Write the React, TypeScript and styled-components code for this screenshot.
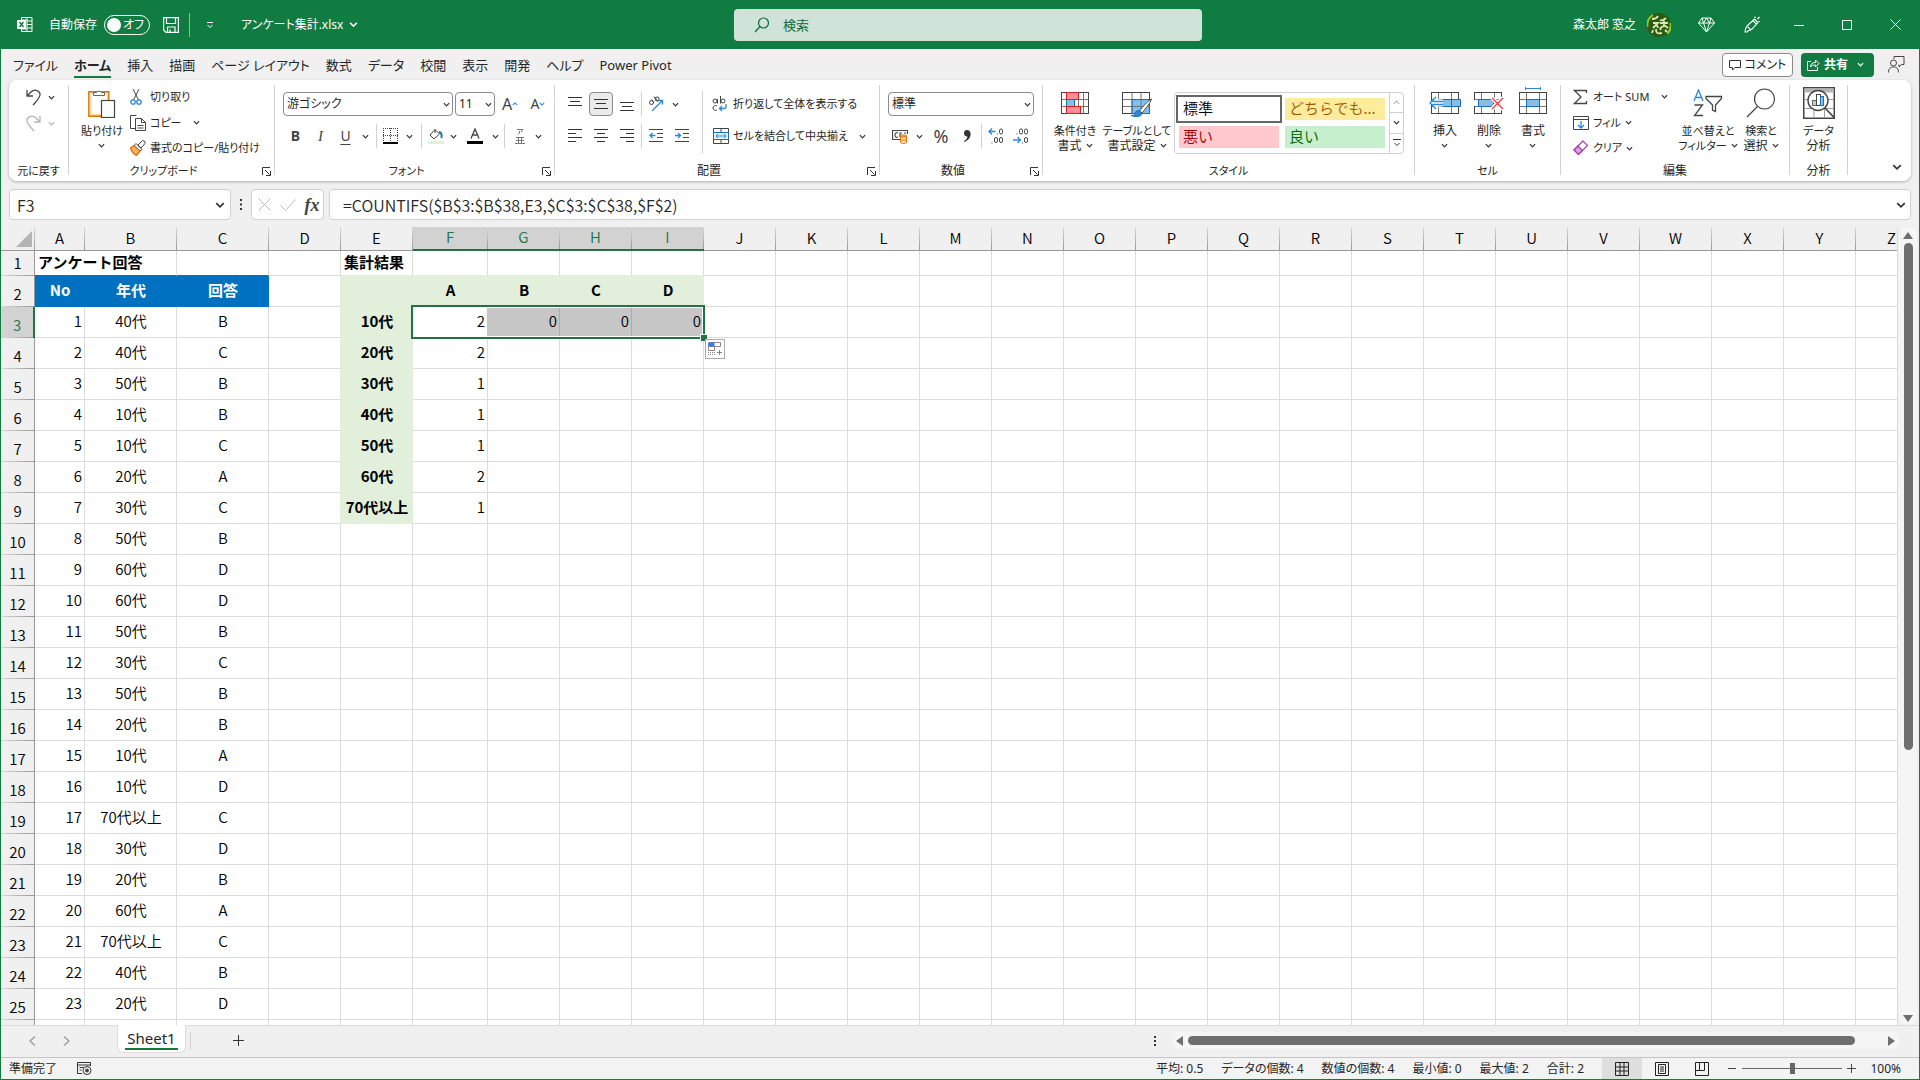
import React from "react";
import styled, { createGlobalStyle, css } from "styled-components";

const UI_FONT = `"Noto Sans", "Noto Sans CJK JP", sans-serif`;
const SHEET_FONT = `"Noto Sans CJK JP", sans-serif`;
const GREEN = "#107c41";
const SELECT_GREEN = "#217346";
const LINE = "#dcdcdc";
const HEAD_LINE = "#999999";
const BLUE = "#0070c0";
const PALE = "#e2efda";

const GlobalStyle = createGlobalStyle`
  *, *::before, *::after { box-sizing: border-box; }
  body { margin: 0; background: #f0f0f0; color: #262626; font: 12px/16px ${UI_FONT}; font-feature-settings: "palt"; }
  button, input, select { font: inherit; font-feature-settings: inherit; color: inherit; margin: 0; }
  svg { display: block; flex: none; }
`;

const Window = styled.div`
  height: 100vh;
  display: flex;
  flex-direction: column;
  overflow: hidden;
  border: 1px solid ${GREEN};
  border-top: 0;
`;

const plainButton = css`
  display: flex;
  align-items: center;
  justify-content: center;
  padding: 0;
  border: 0;
  background: none;
  white-space: nowrap;
`;

/* ---------- title bar ---------- */

const TitleBar = styled.header`
  display: grid;
  grid-template-columns: minmax(0, 1fr) 484px minmax(0, 1fr);
  align-items: center;
  height: 49px;
  background: ${GREEN};
  color: #fff;
`;

const TitleLeft = styled.div`
  display: flex;
  align-items: center;
  padding-left: 16px;
  white-space: nowrap;
`;

const TitleRight = styled.div`
  display: flex;
  align-items: center;
  justify-content: flex-end;
`;

const TitleButton = styled.button<{ $w: number }>`
  ${plainButton}
  width: ${(p) => p.$w}px;
  height: 48px;
  flex: none;
`;

const AutoSave = styled.label`
  display: flex;
  align-items: center;
  gap: 7px;
  margin: 0 13px 0 16px;
`;

const Switch = styled.span`
  position: relative;
  display: flex;
  align-items: center;
  justify-content: flex-end;
  width: 46px;
  height: 20px;
  padding-right: 5px;
  border: 1px solid #fff;
  border-radius: 10px;
  &::before {
    content: "";
    position: absolute;
    left: 2px;
    top: 2px;
    width: 14px;
    height: 14px;
    border-radius: 50%;
    background: #fff;
  }
`;

const SwitchInput = styled.input`
  position: absolute;
  inset: 0;
  width: 100%;
  height: 100%;
  opacity: 0;
`;

const TitleRule = styled.span`
  width: 1px;
  height: 24px;
  margin-left: 10px;
  background: #88bea0;
`;

const FileName = styled.button`
  ${plainButton}
  gap: 6px;
  margin-left: 11px;
`;

const Search = styled.label`
  display: flex;
  align-items: center;
  gap: 13px;
  height: 32px;
  margin-left: 16px;
  padding: 0 20px;
  border-radius: 4px;
  background: #cfe3d8;
  color: #0f6b39;
`;

const SearchInput = styled.input`
  flex: 1;
  min-width: 0;
  height: 24px;
  padding: 0;
  border: 0;
  outline: 0;
  background: none;
  font-size: 13px;
  &::placeholder { color: #0f6b39; opacity: 1; }
`;

const Avatar = styled.span`
  display: flex;
  margin: 0 12px 0 11px;
`;

/* ---------- tabs ---------- */

const TabBar = styled.nav`
  display: flex;
  align-items: center;
  height: 31px;
  padding: 0 14px 0 4px;
  flex: none;
`;

const Tab = styled.button<{ $active?: boolean }>`
  ${plainButton}
  position: relative;
  height: 30px;
  padding: 0 8px;
  font-size: 13px;
  font-weight: ${(p) => (p.$active ? 700 : 400)};
  &::after {
    content: "";
    display: ${(p) => (p.$active ? "block" : "none")};
    position: absolute;
    left: 8px;
    right: 8px;
    bottom: 2px;
    height: 2px;
    background: ${GREEN};
  }
`;

const Spacer = styled.div`
  flex: 1;
`;

const CommentButton = styled.button`
  ${plainButton}
  gap: 4px;
  width: 71px;
  height: 24px;
  border: 1px solid #8a8a8a;
  border-radius: 4px;
  background: #fff;
`;

const ShareButton = styled.button`
  ${plainButton}
  gap: 4px;
  width: 73px;
  height: 24px;
  margin: 0 14px 0 8px;
  border-radius: 4px;
  background: ${GREEN};
  color: #fff;
  font-weight: 600;
`;

/* ---------- ribbon ---------- */

const Ribbon = styled.section`
  display: flex;
  flex: none;
  height: 101px;
  margin: 0 8px;
  padding-top: 3px;
  border-radius: 8px;
  background: #fff;
  box-shadow: 0 1px 3px rgba(0, 0, 0, 0.28);
`;

const GroupBox = styled.div<{ $w: number }>`
  display: flex;
  flex-direction: column;
  flex: none;
  width: ${(p) => p.$w}px;
`;

const GroupBody = styled.div<{ $pad: number }>`
  display: flex;
  height: 78px;
  padding-left: ${(p) => p.$pad}px;
`;

const GroupFoot = styled.div`
  display: flex;
  align-items: center;
  height: 20px;
`;

const GroupName = styled.span<{ $size: number }>`
  flex: 1;
  font-size: ${(p) => p.$size}px;
  text-align: center;
  white-space: nowrap;
`;

const Rule = styled.span<{ $h?: number; $top?: number; $gap?: number }>`
  flex: none;
  width: 1px;
  height: ${(p) => p.$h ?? 90}px;
  margin: ${(p) => p.$top ?? 2}px ${(p) => p.$gap ?? 0}px 0;
  background: #d1d1d1;
`;

const Stack = styled.div`
  display: flex;
  flex-direction: column;
  flex: none;
  padding-top: 1px;
`;

const EditColumn = styled(Stack)`
  width: 106px;
`;

const TwoRows = styled.div`
  display: flex;
  flex-direction: column;
  gap: 8px;
  padding-top: 9px;
`;

const ToolRow = styled.div<{ $gap?: number; $h?: number }>`
  display: flex;
  align-items: center;
  gap: ${(p) => p.$gap ?? 0}px;
  height: ${(p) => p.$h ?? 24}px;
`;

const IconButton = styled.button<{ $w: number; $on?: boolean; $h?: number }>`
  ${plainButton}
  flex: none;
  width: ${(p) => p.$w}px;
  height: ${(p) => p.$h ?? 24}px;
  ${(p) =>
    p.$on &&
    css`
      border: 1px solid #8a8a8a;
      border-radius: 4px;
      background: #ebebeb;
    `}
`;

const LineButton = styled.button`
  ${plainButton}
  justify-content: flex-start;
  gap: 4px;
  height: 26px;
  font-size: 11px;
`;

const BigButton = styled.button<{ $w: number }>`
  ${plainButton}
  flex-direction: column;
  justify-content: flex-start;
  gap: 4px;
  width: ${(p) => p.$w}px;
  padding-top: 4px;
  line-height: 15px;
`;

const BigIcon = styled.span`
  display: flex;
  align-items: center;
  justify-content: center;
  height: 32px;
`;

const BigLine = styled.span<{ $size: number }>`
  display: flex;
  align-items: center;
  justify-content: center;
  gap: 4px;
  height: 15px;
  font-size: ${(p) => p.$size}px;
`;

const SelectShell = styled.span<{ $w: number }>`
  position: relative;
  display: flex;
  width: ${(p) => p.$w}px;
  height: 24px;
`;

const SelectBox = styled.select`
  appearance: none;
  width: 100%;
  padding: 0 16px 0 3px;
  border: 1px solid #8a8a8a;
  border-radius: 4px;
  background: #fff;
`;

const SelectArrow = styled.span`
  position: absolute;
  right: 3px;
  top: 9px;
  pointer-events: none;
`;

const Gallery = styled.div`
  display: flex;
  width: 230px;
  height: 62px;
  margin: 9px 0 0 4px;
  border: 1px solid #d1d1d1;
  border-radius: 4px;
`;

const GalleryGrid = styled.div`
  flex: 1;
  display: grid;
  grid-template-columns: 106px 106px;
  grid-template-rows: 28px 28px;
  padding: 2px 1px;
`;

const StyleCell = styled.button<{ $bg: string; $fg: string; $on?: boolean }>`
  ${plainButton}
  justify-content: flex-start;
  padding: 0 0 3px 4px;
  border: 3px solid #fff;
  outline: ${(p) => (p.$on ? "2px solid #666" : "0")};
  outline-offset: -2px;
  background: ${(p) => p.$bg};
  color: ${(p) => p.$fg};
  font: 15px/20px ${SHEET_FONT};
  font-weight: 350;
  font-feature-settings: normal;
`;

const GalleryNav = styled.div`
  display: flex;
  flex-direction: column;
  width: 14px;
  border-left: 1px solid #d1d1d1;
`;

const GalleryButton = styled.button`
  ${plainButton}
  flex: 1;
  & + & { border-top: 1px solid #d1d1d1; }
`;

const RibbonEnd = styled.div`
  flex: 1;
  display: flex;
  align-items: flex-end;
  justify-content: flex-end;
  padding: 0 4px 2px 0;
`;

const Glyph = styled.span<{ $size?: number; $weight?: number; $italic?: boolean; $underline?: boolean }>`
  font-size: ${(p) => p.$size ?? 14}px;
  font-weight: ${(p) => p.$weight ?? 400};
  font-style: ${(p) => (p.$italic ? "italic" : "normal")};
  font-family: ${(p) => (p.$italic ? `"Liberation Serif", serif` : UI_FONT)};
  text-decoration: ${(p) => (p.$underline ? "underline" : "none")};
  text-underline-offset: 3px;
  color: #444;
`;

/* ---------- formula bar ---------- */

const FormulaBar = styled.div`
  display: flex;
  flex: none;
  height: 31px;
  margin: 8px 8px 7px;
  font: 16px/20px ${SHEET_FONT};
  font-weight: 350;
`;

const Field = styled.div<{ $w?: number }>`
  display: flex;
  align-items: center;
  flex: ${(p) => (p.$w ? "none" : "1")};
  width: ${(p) => (p.$w ? `${p.$w}px` : "auto")};
  border: 1px solid #d1d1d1;
  border-radius: 4px;
  background: #fff;
`;

const FieldInput = styled.input<{ $pad: number }>`
  flex: 1;
  min-width: 0;
  height: 26px;
  padding: 0 0 0 ${(p) => p.$pad}px;
  border: 0;
  outline: 0;
  background: none;
  font-feature-settings: normal;
`;

const Dots = styled.span<{ $w: number }>`
  display: flex;
  align-items: center;
  justify-content: center;
  width: ${(p) => p.$w}px;
`;

/* ---------- sheet ---------- */

const SheetArea = styled.div`
  display: flex;
  flex: 1;
  min-height: 0;
`;

const GridView = styled.div`
  flex: 1;
  min-width: 0;
  overflow: hidden;
  border-right: 1px solid ${LINE};
`;

const Grid = styled.table`
  table-layout: fixed;
  width: 1926px;
  border-collapse: separate;
  border-spacing: 0;
  font: 15px/20px ${SHEET_FONT};
  font-weight: 350;
  font-feature-settings: normal;
  color: #000;
`;

const Col = styled.col<{ $w: number }>`
  width: ${(p) => p.$w}px;
`;

const ColHead = styled.th<{ $on?: boolean }>`
  height: 24px;
  padding: 0 1px 2px 0;
  font-weight: 350;
  border-bottom: ${(p) => (p.$on ? `2px solid ${SELECT_GREEN}` : `1px solid ${HEAD_LINE}`)};
  color: ${(p) => (p.$on ? SELECT_GREEN : "#000")};
  background: linear-gradient(#d8d8d8, ${HEAD_LINE}) right / 1px 100% no-repeat,
    ${(p) => (p.$on ? "#d2d2d2" : "#f0f0f0")};
`;

const Corner = styled.th`
  height: 24px;
  padding: 0 3px 3px 0;
  vertical-align: bottom;
  border-bottom: 1px solid ${HEAD_LINE};
  background: linear-gradient(#d8d8d8, ${HEAD_LINE}) right / 1px 100% no-repeat, #f0f0f0;
  svg { margin-left: auto; }
`;

const RowHead = styled.th<{ $on?: boolean; $h: number }>`
  height: ${(p) => p.$h}px;
  padding: 0 0 3px;
  vertical-align: bottom;
  font-weight: 350;
  border-right: ${(p) => (p.$on ? `2px solid ${SELECT_GREEN}` : `1px solid ${HEAD_LINE}`)};
  color: ${(p) => (p.$on ? SELECT_GREEN : "#000")};
  background: linear-gradient(90deg, #d8d8d8, ${HEAD_LINE}) bottom / 100% 1px no-repeat,
    ${(p) => (p.$on ? "#d2d2d2" : "#f0f0f0")};
`;

const Cell = styled.td<{
  $fill?: string;
  $right: string;
  $bottom: string;
  $align?: string;
  $bold?: boolean;
  $white?: boolean;
}>`
  position: relative;
  padding: 0 2px 2px 3px;
  white-space: nowrap;
  background: ${(p) => p.$fill ?? "#fff"};
  border-right: 1px solid ${(p) => p.$right};
  border-bottom: 1px solid ${(p) => p.$bottom};
  text-align: ${(p) => p.$align ?? "left"};
  font-weight: ${(p) => (p.$bold ? 700 : 350)};
  color: ${(p) => (p.$white ? "#fff" : "#000")};
`;

const Selection = styled.span`
  position: absolute;
  z-index: 2;
  left: -2px;
  top: -2px;
  width: 294px;
  height: 34px;
  border: 2px solid ${SELECT_GREEN};
  box-shadow: inset 0 0 0 1px #fff;
  pointer-events: none;
  &::after {
    content: "";
    position: absolute;
    right: -4px;
    bottom: -4px;
    width: 7px;
    height: 7px;
    border: 1px solid #fff;
    border-width: 1px 0 0 1px;
    background: ${SELECT_GREEN};
  }
`;

const FillOptions = styled.button`
  ${plainButton}
  position: absolute;
  z-index: 2;
  left: 292px;
  top: 32px;
  width: 20px;
  height: 20px;
  border: 1px solid #ababab;
  background: #fff;
`;

const VScroll = styled.div`
  display: flex;
  flex-direction: column;
  align-items: center;
  justify-content: space-between;
  width: 18px;
  margin: 0 2px 0 1px;
  padding: 5px 0 3px;
  border-radius: 8px;
  background: #f5f5f5;
`;

const VTrack = styled.div`
  flex: 1;
  width: 9px;
  margin: 4px 0;
`;

const VThumb = styled.div`
  height: 66%;
  border-radius: 5px;
  background: #6e6e6e;
`;

/* ---------- bottom ---------- */

const SheetTabs = styled.div`
  display: flex;
  align-items: center;
  flex: none;
  height: 32px;
  padding: 0 19px 2px 14px;
  border-top: 1px solid ${LINE};
`;

const SheetTab = styled.button`
  ${plainButton}
  align-self: flex-start;
  width: 69px;
  height: 28px;
  margin: -1px 4px 0 34px;
  border: 1px solid #dcdcdc;
  border-top: 0;
  border-radius: 0 0 6px 6px;
  background: #fff;
  font-size: 15px;
`;

const SheetName = styled.span`
  padding: 0 2px;
  border-bottom: 2px solid ${GREEN};
  line-height: 20px;
`;

const HScroll = styled.div`
  display: flex;
  align-items: center;
  width: 728px;
  height: 17px;
  margin-left: 9px;
  padding: 0 5px 0 4px;
  border-radius: 8px;
  background: #f5f5f5;
`;

const HTrack = styled.div`
  flex: 1;
  margin: 0 5px;
`;

const HThumb = styled.div`
  width: 96%;
  height: 9px;
  border-radius: 5px;
  background: #6e6e6e;
`;

const StatusBar = styled.footer`
  display: flex;
  align-items: center;
  flex: none;
  height: 22px;
  padding: 0 18px 0 8px;
  border-top: 1px solid #c6c6c6;
  background: #f3f3f3;
  white-space: nowrap;
`;

const Stats = styled.div`
  display: flex;
  gap: 18px;
  margin-right: 18px;
`;

const ViewButton = styled.button<{ $on?: boolean }>`
  ${plainButton}
  width: 40px;
  height: 21px;
  background: ${(p) => (p.$on ? "#dedede" : "none")};
`;

const ZoomButton = styled.button<{ $w: number }>`
  ${plainButton}
  width: ${(p) => p.$w}px;
  height: 20px;
`;

const Slider = styled.input`
  appearance: none;
  width: 100px;
  height: 14px;
  background: linear-gradient(#666, #666) center / 100% 1px no-repeat;
  &::-webkit-slider-thumb {
    appearance: none;
    width: 5px;
    height: 11px;
    background: #666;
  }
`;

const ZoomValue = styled.span`
  width: 41px;
  text-align: right;
`;

/* ---------- icons ---------- */

const Chevron = ({ size = 7, color = "#333", up = false }: { size?: number; color?: string; up?: boolean }) => (
  <svg width={size} height={size} viewBox="0 0 8 8" fill="none" stroke={color} strokeWidth="1.4">
    <path d={up ? "M1 5.5 4 2.5 7 5.5" : "M1 2.5 4 5.5 7 2.5"} />
  </svg>
);

const Launcher = () => (
  <IconButton $w={16} $h={16} aria-label="詳細設定">
    <svg width="9" height="9" viewBox="0 0 9 9" fill="none" stroke="#333">
      <path d="M.5 8V.5H8M3 3l4.5 4.5M8.500 4v4.500H4" />
    </svg>
  </IconButton>
);

const Ico = ({ w = 16, h = 16, children }: { w?: number; h?: number; children: React.ReactNode }) => (
  <svg width={w} height={h} viewBox={`0 0 ${w} ${h}`} fill="none" stroke="#444" strokeWidth="1">
    {children}
  </svg>
);

const ExcelIcon = () => (
  <svg width="16" height="17" viewBox="0 0 16 17" fill="none" stroke="#fff">
    <path d="M4.500 4V1.500h10.500v14H4.500V13M10 1.500v14M10 5h5M10 8.500h5M10 12h5M4.500 4h5.500M4.500 13h5.500" />
    <rect x="0" y="4" width="9" height="9" fill="#fff" stroke="none" />
    <path d="m2.500 6 4 5M6.500 6l-4 5" stroke={GREEN} strokeWidth="1.4" />
  </svg>
);

const SaveIcon = () => (
  <svg width="16" height="16" viewBox="0 0 16 16" fill="none" stroke="#fff" strokeWidth="1.2">
    <path d="M.6.6h14.800v14.800H3L.6 13zM3.500 1v5.500h9V1M4.500 15v-5h7.500v5M7 12.500V15" />
  </svg>
);

const linesIcon = (rows: [number, number, number][]) => (
  <Ico w={14} h={14}>
    <path stroke="#333" d={rows.map(([x, y, w]) => `M${x} ${y}.5h${w}`).join("")} />
  </Ico>
);

const GridBase = ({ top = 0 }: { top?: number }) => (
  <g transform={`translate(0 ${top})`}>
    <rect x="0.500" y="0.500" width="27" height="21" fill="#fff" stroke="#444" />
    <path stroke="#777" d="M7.500 1v20M20.500 1v20M1 7.500h26M1 14.500h26" />
  </g>
);

const CondIcon = () => (
  <svg width="28" height="22" viewBox="0 0 28 22" fill="none">
    <rect x=".5" y=".5" width="27" height="21" fill="#fff" stroke="#444" />
    <path stroke="#777" d="M5.500 1v20M17.500 1v20M22.500 1v20M1 7.500h26M1 14.500h26" />
    <rect x="5.500" y=".5" width="12" height="7" fill="#ff8f94" stroke="#d02020" />
    <rect x="5.500" y="7.500" width="8" height="7" fill="#83beec" stroke="#1a6fb5" />
    <rect x="5.500" y="14.500" width="14" height="7" fill="#ff8f94" stroke="#d02020" />
  </svg>
);

const TableIcon = () => (
  <svg width="30" height="28" viewBox="0 0 30 28" fill="none">
    <rect x=".5" y="3.500" width="27" height="21" fill="#fff" stroke="#444" />
    <path d="M10 10.500h17.500v14H10z" fill="#83beec" />
    <path stroke="#777" d="M10 4v20M19 4v20M1 10.500h26M1 17.500h26" />
    <path d="M10 10.500h17.500v14H10z" stroke="#1a6fb5" />
    <path d="M29.500 10c-4 2-9 8-12 12l2.500 2c3-4 8-9 9.500-14z" fill="#fff" stroke="#444" />
    <path d="M17 21.500c-3 0-4 1.500-4 3.500 0 1-2 1.500-4 1.500 3 1.500 11 2 11-2.500z" fill="#2b88d8" stroke="#1a6fb5" />
  </svg>
);

const InsertIcon = () => (
  <svg width="32" height="22" viewBox="-2 0 32 22" fill="none">
    <GridBase />
    <path d="M11 7.500h18.500v7H11z" fill="#83beec" stroke="#1a6fb5" />
    <path d="M20.500 8v6" stroke="#1a6fb5" />
    <path d="M12 9.500H3l3-4M12 12.500H3l3 4" stroke="#fff" strokeWidth="4" />
    <path d="M12 9.500H1.500M12 12.500H1.500M5 5l-6 6 6 6" stroke="#2b88d8" strokeWidth="1.300" />
  </svg>
);

const DeleteIcon = () => (
  <svg width="30" height="22" viewBox="0 0 30 22" fill="none">
    <GridBase />
    <path d="M0 8h5v6H0zM22 8h8v6h-8z" fill="#fff" />
    <path d="M4.500 7.500H17l3 3.500-3 3.500H4.500z" fill="#83beec" stroke="#1a6fb5" />
    <path d="m18 6 11 11M29 6 18 17" stroke="#fff" strokeWidth="4" />
    <path d="m18 6 11 11M29 6 18 17" stroke="#e84040" strokeWidth="1.400" />
  </svg>
);

const FormatIcon = () => (
  <svg width="28" height="32" viewBox="0 0 28 32" fill="none">
    <GridBase top={5} />
    <rect x="7.500" y="12.500" width="13" height="7" fill="#83beec" stroke="#1a6fb5" />
    <path d="M6.500 0v3M21.500 0v3M6.500 1.500h15" stroke="#2b88d8" />
  </svg>
);

const SortIcon = () => (
  <svg width="30" height="28" viewBox="0 0 30 28" fill="none" strokeWidth="1.300">
    <path d="M1 12 5.500 1 10 12M2.500 8.500h6" stroke="#2b88d8" />
    <path d="M1.500 16h8L1.500 26.500h8.500" stroke="#444" />
    <path d="M13 7.500h15.500v2L22.500 16v6.500l-3-1.500v-5L13 9.500z" stroke="#444" />
  </svg>
);

const FindIcon = () => (
  <svg width="30" height="30" viewBox="0 0 30 30" fill="none" stroke="#444" strokeWidth="1.200">
    <circle cx="18.500" cy="11" r="10" />
    <path d="M11.500 18.500 1 29" />
  </svg>
);

const AnalysisIcon = () => (
  <svg width="32" height="32" viewBox="0 0 32 32" fill="none">
    <rect x=".75" y=".75" width="30.500" height="30.500" fill="#fff" stroke="#444" strokeWidth="1.500" />
    <path d="M1.500 1.500h29v4h-29z" fill="#b5b5b5" />
    <path d="M1 12.500h30M1 21.500h30M11 6v25M21.500 6v25" stroke="#999" />
    <circle cx="15" cy="13.500" r="10" fill="#fff" stroke="#444" strokeWidth="1.400" />
    <rect x="9.500" y="13.500" width="4" height="5" fill="#ccc" stroke="#666" />
    <rect x="13.500" y="7.500" width="4" height="11" fill="#fff" stroke="#444" />
    <rect x="17.500" y="9.500" width="3" height="9" fill="#83beec" stroke="#1a6fb5" />
    <path d="m22 21 9.500 10" stroke="#444" strokeWidth="1.600" />
  </svg>
);

const PasteIcon = () => (
  <svg width="28" height="30" viewBox="0 0 28 30" fill="none">
    <path d="M2 4.500h18v23H2z" fill="#fff" stroke="#fbdca4" strokeWidth="3" />
    <path d="M.75 3.750h20v24.500h-20z" stroke="#d9730d" strokeWidth="1.300" />
    <path d="M5.500 7.500v-3h3a3 3 0 0 1 5 0h3v3z" fill="#fff" stroke="#666" />
    <rect x="13.500" y="12.500" width="13" height="17" fill="#fff" stroke="#444" strokeWidth="1.200" />
  </svg>
);

/* ---------- data ---------- */

const TABS = ["ファイル", "ホーム", "挿入", "描画", "ページ レイアウト", "数式", "データ", "校閲", "表示", "開発", "ヘルプ", "Power Pivot"];

const COLS: [string, number][] = "ABCDEFGHIJKLMNOPQRSTUVWXYZ".split("").map((c) => {
  const widths: Record<string, number> = { A: 50, B: 92, C: 92, F: 75 };
  return [c, widths[c] ?? 72];
});

const ANSWERS: [string, string][] = [
  ["40代", "B"], ["40代", "C"], ["50代", "B"], ["10代", "B"], ["10代", "C"], ["20代", "A"],
  ["30代", "C"], ["50代", "B"], ["60代", "D"], ["60代", "D"], ["50代", "B"], ["30代", "C"],
  ["50代", "B"], ["20代", "B"], ["10代", "A"], ["10代", "D"], ["70代以上", "C"], ["30代", "D"],
  ["20代", "B"], ["60代", "A"], ["70代以上", "C"], ["40代", "B"], ["20代", "D"],
];

const SUMMARY: [string, number][] = [
  ["10代", 2], ["20代", 2], ["30代", 1], ["40代", 1], ["50代", 1], ["60代", 2], ["70代以上", 1],
];

const STATS = ["平均: 0.5", "データの個数: 4", "数値の個数: 4", "最小値: 0", "最大値: 2", "合計: 2"];

type CellData = { text?: string | number; align?: string; bold?: boolean; white?: boolean; span?: number };

function cellAt(c: string, r: number): CellData {
  if (r === 1) {
    if (c === "A") return { text: "アンケート回答", bold: true, span: 2 };
    if (c === "E") return { text: "集計結果", bold: true };
    return {};
  }
  if (r === 2) {
    const heads: Record<string, string> = { A: "No", B: "年代", C: "回答" };
    if (heads[c]) return { text: heads[c], align: "center", bold: true, white: true };
    const at = "FGHI".indexOf(c);
    return at >= 0 ? { text: "ABCD"[at], align: "center", bold: true } : {};
  }
  const answer = ANSWERS[r - 3];
  if (answer && c === "A") return { text: r - 2, align: "right" };
  if (answer && c === "B") return { text: answer[0], align: "center" };
  if (answer && c === "C") return { text: answer[1], align: "center" };
  const sum = SUMMARY[r - 3];
  if (sum && c === "E") return { text: sum[0], align: "center", bold: true };
  if (sum && c === "F") return { text: sum[1], align: "right" };
  if (r === 3 && "GHI".includes(c)) return { text: 0, align: "right" };
  return {};
}

function fillAt(c: string | undefined, r: number): string | undefined {
  if (!c) return undefined;
  if (r === 2 && "ABC".includes(c)) return BLUE;
  if (r === 2 && "EFGHI".includes(c)) return PALE;
  if (c === "E" && r >= 3 && r <= 9) return PALE;
  if (r === 3 && "GHI".includes(c)) return "#c6c6c6";
  return undefined;
}

function lineColors(i: number, r: number) {
  const c = COLS[i][0];
  const own = fillAt(c, r);
  if (own === "#c6c6c6") return { right: "#ababab", bottom: LINE };
  const next = fillAt(COLS[i + 1]?.[0], r);
  const below = fillAt(c, r + 1);
  return {
    right: own ?? next ?? LINE,
    bottom: own ?? (below === "#c6c6c6" ? LINE : below) ?? LINE,
  };
}

const ROWS = Array.from({ length: 25 }, (_, i) => i + 1);

const hasKana = (text: string) => /[ぁ-ヶ]/.test(text);
const labelSize = (text: string) => (hasKana(text) ? 11 : 12);

/* ---------- pieces ---------- */

function Group({ w, name, pad = 8, launcher, children }: { w: number; name: string; pad?: number; launcher?: boolean; children: React.ReactNode }) {
  return (
    <>
      <GroupBox $w={w}>
        <GroupBody $pad={pad}>{children}</GroupBody>
        <GroupFoot>
          <GroupName $size={labelSize(name)}>{name}</GroupName>
          {launcher && <Launcher />}
        </GroupFoot>
      </GroupBox>
      <Rule />
    </>
  );
}

const Arrow = ({ w, label, color }: { w: number; label: string; color?: string }) => (
  <IconButton $w={w} aria-label={label}>
    <Chevron color={color} />
  </IconButton>
);

const Big = ({ w, icon, lines, arrow = true }: { w: number; icon: React.ReactNode; lines: string[]; arrow?: boolean }) => (
  <BigButton $w={w}>
    <BigIcon>{icon}</BigIcon>
    <span>
      <BigLine $size={labelSize(lines[0])}>{lines[0]}</BigLine>
      <BigLine $size={labelSize(lines[1])}>
        {lines[1]}
        {arrow && <Chevron />}
      </BigLine>
    </span>
  </BigButton>
);

const Combo = ({ w, label, value }: { w: number; label: string; value: string }) => (
  <SelectShell $w={w}>
    <SelectBox aria-label={label}>
      <option>{value}</option>
    </SelectBox>
    <SelectArrow>
      <Chevron />
    </SelectArrow>
  </SelectShell>
);

function Title() {
  return (
    <TitleBar>
      <TitleLeft>
        <ExcelIcon />
        <AutoSave>
          自動保存
          <Switch>
            <SwitchInput type="checkbox" />
            オフ
          </Switch>
        </AutoSave>
        <SaveIcon />
        <TitleRule />
        <TitleButton $w={40} aria-label="クイック アクセス ツール バー">
          <svg width="8" height="8" viewBox="0 0 8 8" fill="none" stroke="#fff"><path d="M1 1.500h6M1.500 4 4 6.500 6.500 4" /></svg>
        </TitleButton>
        <FileName>
          アンケート集計.xlsx
          <Chevron size={9} color="#fff" />
        </FileName>
      </TitleLeft>
      <Search>
        <svg width="16" height="16" viewBox="0 0 16 16" fill="none" stroke="#0f6b39" strokeWidth="1.200">
          <circle cx="9.500" cy="6" r="5" />
          <path d="M6 9.500 1 15" />
        </svg>
        <SearchInput type="search" aria-label="検索" placeholder="検索" />
      </Search>
      <TitleRight>
        <span>森太郎 窓之</span>
        <Avatar>
          <svg width="24" height="24" viewBox="0 0 24 24" fill="none">
            <circle cx="12" cy="12" r="12" fill="#2d5a12" />
            <path d="M0.500 14A12 12 0 0 1 6 2M23.500 10a12 12 0 0 1-3 10.500" stroke="#9ccc2a" strokeWidth="2" />
            <path d="M5 6c3 0 5-1 6-3M6 10h5L6 15M9 10l2 5M13 7c2 1 4 0 6-2M13 10h8M17 8v5l-4 2M17 12l4 3M6 17l-1 3M9 16c0 4 1 5 6 4M13 15l1 2M18 17l2 2" stroke="#dcebb4" strokeWidth="1.800" />
          </svg>
        </Avatar>
        <TitleButton $w={46} aria-label="プレミアム">
          <svg width="17" height="16" viewBox="0 0 17 16" fill="none" stroke="#fff"><path d="M4 1h9l3.500 5L8.500 15 .5 6zM.5 6h16M5.500 6l3 9 3-9-3-5zM4 1l1.500 5M13 1l-1.500 5" /></svg>
        </TitleButton>
        <TitleButton $w={46} aria-label="ペン">
          <svg width="17" height="17" viewBox="0 0 17 17" fill="none" stroke="#fff" strokeWidth="1.100"><path d="M1 16c0-3 1-5 3-7l5-4.500 3.500 3.500L8 13c-1.500 1.500-3 1-4 2l-1 1zM9 4.500l1.500-1.500L14 6.500 12.500 8M11 2V.5M13.500 3 15.500 1M14.500 5.500H16M4 11l2.500 2.500" /></svg>
        </TitleButton>
        <TitleButton $w={48} aria-label="最小化">
          <svg width="10" height="10" viewBox="0 0 10 10" stroke="#fff"><path d="M0 5.500h10" /></svg>
        </TitleButton>
        <TitleButton $w={48} aria-label="最大化">
          <svg width="10" height="10" viewBox="0 0 10 10" fill="none" stroke="#fff"><path d="M.5.5h9v9h-9z" /></svg>
        </TitleButton>
        <TitleButton $w={48} aria-label="閉じる">
          <svg width="11" height="11" viewBox="0 0 11 11" stroke="#fff"><path d="m.5.5 10 10M10.500.5l-10 10" /></svg>
        </TitleButton>
      </TitleRight>
    </TitleBar>
  );
}

function RibbonTabs() {
  return (
    <TabBar>
      {TABS.map((t) => (
        <Tab key={t} $active={t === "ホーム"}>{t}</Tab>
      ))}
      <Spacer />
      <CommentButton>
        <Ico w={12} h={12}><path stroke="#333" d="M.5 1.500h11v7H6l-2.500 2.500V8.500h-3z" /></Ico>
        コメント
      </CommentButton>
      <ShareButton>
        <Ico w={13} h={13}><path stroke="#fff" d="M4 3.500H.5v9h10V9M3.500 9c0-3 2-4.500 5-4.500V2L12 5.500 8.500 9V7c-2.500 0-4 .5-5 2z" /></Ico>
        共有
        <IconButton as="span" $w={16}><Chevron color="#fff" /></IconButton>
      </ShareButton>
      <Ico w={17} h={17}><circle cx="5.500" cy="7" r="3" /><path d="M.5 16.500c0-4 2-5.500 5-5.500s5 1.500 5 5.500M6 3V.5h10v8h-2.500L11 11V8.500" /></Ico>
    </TabBar>
  );
}

const blueLine = "#2b88d8";

function HomeRibbon() {
  return (
    <Ribbon>
      <Group w={59} name="元に戻す" pad={15}>
        <Stack>
          <ToolRow $h={26}>
            <IconButton $w={20} aria-label="元に戻す">
              <svg width="16" height="17" viewBox="0 0 16 17" fill="none" stroke="#444" strokeWidth="1.300"><path d="M1 1v6h6M1 7l4-4c3-3 8-2 9 1.500 1 3.500-3 7-7 11.500" /></svg>
            </IconButton>
            <Arrow w={14} label="元に戻す一覧" />
          </ToolRow>
          <ToolRow $h={26}>
            <IconButton $w={20} aria-label="やり直し">
              <svg width="16" height="17" viewBox="0 0 16 17" fill="none" stroke="#b5b5b5" strokeWidth="1.300"><path d="M14 1v6H8M14 7l-4-4C7 0 2 1 1 4.500 0 8 4 11.500 8 16" /></svg>
            </IconButton>
            <Arrow w={14} label="やり直し一覧" color="#b5b5b5" />
          </ToolRow>
        </Stack>
      </Group>
      <Group w={205} name="クリップボード" pad={9} launcher>
        <Big w={48} icon={<PasteIcon />} lines={["貼り付け", ""]} />
        <Stack>
          <LineButton>
            <Ico w={20}>
              <path d="M7 0l5.500 11M13 0 7.500 11" />
              <circle cx="7" cy="13" r="2.200" stroke={blueLine} strokeWidth="1.300" />
              <circle cx="13" cy="13" r="2.200" stroke={blueLine} strokeWidth="1.300" />
            </Ico>
            切り取り
          </LineButton>
          <LineButton>
            <Ico w={20}>
              <path d="M9 13.500H4.500V.5h6M9.500 3.500h6l4 4v8h-10zM15.500 3.500v4h4M11.500 10.500h6M11.500 13h6" />
            </Ico>
            コピー
            <IconButton as="span" $w={22}><Chevron /></IconButton>
          </LineButton>
          <LineButton>
            <Ico w={20}>
              <path d="M19 1.500 16.500.5 12 5l3 3 4-4.500zM10 3.500l6 6-2 1.500-6-5.500z" fill="#fff" />
              <path d="M8 5.500 4.500 8c1 3 3 6 6 7.500L14 11z" fill="#f7b267" stroke="#d9730d" strokeWidth="1.300" />
            </Ico>
            書式のコピー/貼り付け
          </LineButton>
        </Stack>
      </Group>
      <Group w={279} name="フォント" launcher>
        <TwoRows>
          <ToolRow $gap={2}>
            <Combo w={170} label="フォント" value="游ゴシック" />
            <Combo w={40} label="フォント サイズ" value="11" />
            <IconButton $w={26} aria-label="フォント サイズの拡大">
              <Glyph $size={16}>A</Glyph>
              <Chevron size={6} color={blueLine} up />
            </IconButton>
            <IconButton $w={26} aria-label="フォント サイズの縮小">
              <Glyph>A</Glyph>
              <Chevron size={6} color={blueLine} />
            </IconButton>
          </ToolRow>
          <ToolRow>
            <IconButton $w={25}><Glyph $weight={700}>B</Glyph></IconButton>
            <IconButton $w={25}><Glyph $size={15} $italic>I</Glyph></IconButton>
            <IconButton $w={25}><Glyph $underline>U</Glyph></IconButton>
            <Arrow w={14} label="下線の種類" />
            <Rule $h={24} $top={0} $gap={4} />
            <IconButton $w={20} aria-label="罫線">
              <Ico><path strokeDasharray="1 1" d="M0 .5h15M.5 0v14M14.500 0v14M0 7.500h15M7.500 0v14" /><path d="M0 15h15" stroke="#000" strokeWidth="2" /></Ico>
            </IconButton>
            <Arrow w={16} label="罫線の種類" />
            <Rule $h={24} $top={0} $gap={4} />
            <IconButton $w={20} aria-label="塗りつぶしの色">
              <Ico><path d="M7 1.500 2 7l4 4 5.500-5L7 1.500V5" /><path d="M11 4c2 0 3 2 2.500 6" stroke="#1a6fb5" strokeWidth="2" /><path d="M0 14.500h16" stroke={PALE} strokeWidth="3" /></Ico>
            </IconButton>
            <Arrow w={14} label="塗りつぶしの色一覧" />
            <IconButton $w={30} aria-label="フォントの色">
              <Ico><path d="M4 10.500 8 1l4 9.500M5.500 7h5" strokeWidth="1.300" /><path d="M0 14.500h16" stroke="#000" strokeWidth="3" /></Ico>
            </IconButton>
            <Arrow w={10} label="フォントの色一覧" />
            <Rule $h={24} $top={0} $gap={4} />
            <IconButton $w={22} aria-label="ふりがな">
              <Ico w={10}><path stroke="#777" d="M2 1.500h6L6 4M4.500 3v2L3 6.500M1 9.500h8M1 12.500h8M0 15.500h10M3.500 10v5M6.500 10v5" /></Ico>
            </IconButton>
            <Arrow w={14} label="ふりがな一覧" />
          </ToolRow>
        </TwoRows>
      </Group>
      <Group w={324} name="配置" launcher>
        <TwoRows>
          <ToolRow $gap={2}>
            <IconButton $w={24} aria-label="上揃え">{linesIcon([[0, 0, 14], [2, 4, 10], [0, 8, 14]])}</IconButton>
            <IconButton $w={24} $on aria-label="上下中央揃え">{linesIcon([[0, 2, 14], [2, 6, 10], [0, 11, 14]])}</IconButton>
            <IconButton $w={24} aria-label="下揃え">{linesIcon([[0, 5, 14], [2, 9, 10], [0, 13, 14]])}</IconButton>
            <Rule $h={24} $top={0} />
            <IconButton $w={24} aria-label="方向">
              <Ico><circle cx="3.500" cy="6.500" r="2" /><path d="M3.500 3.500 6 7M6 .5l4 5" /><circle cx="9" cy="3" r="2" /><path d="M4 15 14.500 4.500M10.500 4.500h4v4" stroke={blueLine} strokeWidth="1.300" /></Ico>
            </IconButton>
            <Arrow w={10} label="方向一覧" />
          </ToolRow>
          <ToolRow $gap={2}>
            <IconButton $w={24} aria-label="左揃え">{linesIcon([[0, 0, 14], [0, 4, 8], [0, 8, 14], [0, 12, 8]])}</IconButton>
            <IconButton $w={24} aria-label="中央揃え">{linesIcon([[0, 0, 14], [3, 4, 8], [0, 8, 14], [3, 12, 8]])}</IconButton>
            <IconButton $w={24} aria-label="右揃え">{linesIcon([[0, 0, 14], [6, 4, 8], [0, 8, 14], [6, 12, 8]])}</IconButton>
            <Rule $h={24} $top={0} />
            <IconButton $w={24} aria-label="インデントを減らす">
              <Ico w={14} h={14}><path d="M0 .5h14M8 4.500h6M8 8.500h6M0 12.500h14" /><path d="M6.500 6.500H1M3.500 4 1 6.500 3.500 9" stroke={blueLine} strokeWidth="1.300" /></Ico>
            </IconButton>
            <IconButton $w={24} aria-label="インデントを増やす">
              <Ico w={14} h={14}><path d="M0 .5h14M8 4.500h6M8 8.500h6M0 12.500h14" /><path d="M0 6.500h5.500M3 4l2.500 2.500L3 9" stroke={blueLine} strokeWidth="1.300" /></Ico>
            </IconButton>
          </ToolRow>
        </TwoRows>
        <Rule $h={62} $top={8} $gap={8} />
        <TwoRows>
          <ToolRow>
            <LineButton>
              <Ico w={18}><circle cx="4" cy="5" r="2" /><path d="M6.500 3v4.500M9.500 0v7.500M6 10c-2-1-4 0-4 2s2 3 4 2" /><circle cx="12" cy="5" r="2" /><path d="M15 8v2.500c0 1-1 2-2 2H8.500M11 10l-2.500 2.500L11 15" stroke={blueLine} strokeWidth="1.300" /></Ico>
              折り返して全体を表示する
            </LineButton>
          </ToolRow>
          <ToolRow>
            <LineButton>
              <Ico w={18}><path d="M2.500.5h15v15h-15zM2.500 4.500h15M2.500 11.500h15M10 1v3M10 12v3" /><path d="M2.500 4.500h15v7h-15z" fill="#e3f1fb" stroke="#1a6fb5" /><path d="M5 8h10M7 6 5 8l2 2M13 6l2 2-2 2" stroke={blueLine} /></Ico>
              セルを結合して中央揃え
              <IconButton as="span" $w={22}><Chevron /></IconButton>
            </LineButton>
          </ToolRow>
        </TwoRows>
      </Group>
      <Group w={162} name="数値" launcher>
        <TwoRows>
          <ToolRow>
            <Combo w={146} label="表示形式" value="標準" />
          </ToolRow>
          <ToolRow>
            <IconButton $w={24} aria-label="通貨表示形式">
              <Ico><path d="M8 11.500H.5v-9h15V6M6 5c-2-1-3 0-3 2s1 3 3 2M8 9V5h2M12 5h2" strokeWidth="1.200" /><path d="M8.500 8h6v6c0 2-6 2-6 0z" fill="#fbdca4" stroke="#d9730d" /><path d="M8.500 8c0 1.500 6 1.500 6 0s-6-1.500-6 0M8.500 11c0 1.500 6 1.500 6 0" stroke="#d9730d" /></Ico>
            </IconButton>
            <Arrow w={14} label="通貨一覧" />
            <IconButton $w={30}><Glyph $size={18}>%</Glyph></IconButton>
            <IconButton $w={22} aria-label="桁区切りスタイル">
              <svg width="8" height="14" viewBox="0 0 8 14"><path d="M4 1a3.200 3.200 0 1 0 .5 6.400C4 9.500 3 11 1 12l.5 1C5 11.500 8 8.500 7.600 4.500 7.400 2.300 6 1 4 1z" fill="#333" /></svg>
            </IconButton>
            <Rule $h={24} $top={0} $gap={3} />
            <IconButton $w={22} aria-label="小数点以下の表示桁数を増やす">
              <Ico><path d="M7.500 3.500H1M4 .5l-3 3 3 3" stroke={blueLine} strokeWidth="1.300" /><rect x="11.500" y="1" width="3" height="5" rx="1.500" /><rect x="6.500" y="9.500" width="3" height="5" rx="1.500" /><rect x="11.500" y="9.500" width="3" height="5" rx="1.500" /><path d="M9 6h1M3.500 15h1" /></Ico>
            </IconButton>
            <IconButton $w={28} aria-label="小数点以下の表示桁数を減らす">
              <Ico><rect x="6.500" y="1" width="3" height="5" rx="1.500" /><rect x="11.500" y="1" width="3" height="5" rx="1.500" /><rect x="11.500" y="9.500" width="3" height="5" rx="1.500" /><path d="M3.500 6h1M9 15h1" /><path d="M0 12h7M4.500 9l3 3-3 3" stroke={blueLine} strokeWidth="1.300" /></Ico>
            </IconButton>
          </ToolRow>
        </TwoRows>
      </Group>
      <Group w={371} name="スタイル" pad={3}>
        <Big w={58} icon={<CondIcon />} lines={["条件付き", "書式"]} />
        <Big w={66} icon={<TableIcon />} lines={["テーブルとして", "書式設定"]} />
        <Gallery>
          <GalleryGrid>
            <StyleCell $bg="#fff" $fg="#000" $on>標準</StyleCell>
            <StyleCell $bg="#ffeb9c" $fg="#9c5700">どちらでも...</StyleCell>
            <StyleCell $bg="#ffc7ce" $fg="#9c0006">悪い</StyleCell>
            <StyleCell $bg="#c6efce" $fg="#006100">良い</StyleCell>
          </GalleryGrid>
          <GalleryNav>
            <GalleryButton aria-label="前の行"><Chevron up color="#b5b5b5" /></GalleryButton>
            <GalleryButton aria-label="次の行"><Chevron /></GalleryButton>
            <GalleryButton aria-label="その他">
              <svg width="8" height="8" viewBox="0 0 8 8" fill="none" stroke="#333"><path d="M0 .5h8M1.500 4 4 6.500 6.500 4" /></svg>
            </GalleryButton>
          </GalleryNav>
        </Gallery>
      </Group>
      <Group w={145} name="セル">
        <Big w={44} icon={<InsertIcon />} lines={["挿入", ""]} />
        <Big w={44} icon={<DeleteIcon />} lines={["削除", ""]} />
        <Big w={44} icon={<FormatIcon />} lines={["書式", ""]} />
      </Group>
      <Group w={228} name="編集" pad={12}>
        <EditColumn>
          <LineButton>
            <Ico><path d="M13.500 4V1.500h-12L8 8l-6.500 6.500h12V12" strokeWidth="1.300" /></Ico>
            オート SUM
            <IconButton as="span" $w={22}><Chevron /></IconButton>
          </LineButton>
          <LineButton>
            <Ico><path d="M.5 1.500h15v13H.5zM.5 4.500h15" /><path d="M8 6v7M5 10l3 3 3-3" stroke={blueLine} strokeWidth="1.300" /></Ico>
            フィル
            <Chevron />
          </LineButton>
          <LineButton>
            <Ico><path d="M10 1 1 10l4.500 4.500 9-9z" fill="#fff" stroke="#a23aa8" strokeWidth="1.200" /><path d="M5 6 1 10l4.500 4.500 4-4z" fill="#dca0e0" stroke="#a23aa8" strokeWidth="1.200" /></Ico>
            クリア
            <Chevron />
          </LineButton>
        </EditColumn>
        <Big w={58} icon={<SortIcon />} lines={["並べ替えと", "フィルター"]} />
        <Big w={48} icon={<FindIcon />} lines={["検索と", "選択"]} />
      </Group>
      <Group w={57} name="分析" pad={0}>
        <Big w={57} icon={<AnalysisIcon />} lines={["データ", "分析"]} arrow={false} />
      </Group>
      <RibbonEnd>
        <IconButton $w={20} aria-label="リボンを折りたたむ"><Chevron size={10} /></IconButton>
      </RibbonEnd>
    </Ribbon>
  );
}

function Formula() {
  return (
    <FormulaBar>
      <Field $w={222}>
        <FieldInput $pad={7} aria-label="名前ボックス" defaultValue="F3" />
        <IconButton $w={20} aria-label="名前一覧"><Chevron size={10} /></IconButton>
      </Field>
      <Dots $w={20}>
        <svg width="2" height="11" viewBox="0 0 2 11" fill="#333"><path d="M0 0h2v2H0zM0 4.500h2v2H0zM0 9h2v2H0z" /></svg>
      </Dots>
      <Field $w={73}>
        <IconButton $w={24} aria-label="キャンセル"><svg width="13" height="13" viewBox="0 0 13 13" stroke="#bbb"><path d="m.5.5 12 12M12.500.5l-12 12" /></svg></IconButton>
        <IconButton $w={24} aria-label="入力"><svg width="16" height="12" viewBox="0 0 16 12" fill="none" stroke="#bbb"><path d="m.5 6.500 5 5L15.500.5" /></svg></IconButton>
        <IconButton $w={24} aria-label="関数の挿入"><Glyph $size={18} $weight={700} $italic>fx</Glyph></IconButton>
      </Field>
      <Dots $w={5} />
      <Field>
        <FieldInput $pad={13} aria-label="数式バー" defaultValue="=COUNTIFS($B$3:$B$38,E3,$C$3:$C$38,$F$2)" />
        <IconButton $w={18} aria-label="数式バーの展開"><Chevron size={10} /></IconButton>
      </Field>
    </FormulaBar>
  );
}

function Sheet() {
  return (
    <SheetArea>
      <GridView>
        <Grid>
          <colgroup>
            <Col $w={34} />
            {COLS.map(([c, w]) => <Col key={c} $w={w} />)}
          </colgroup>
          <thead>
            <tr>
              <Corner aria-label="すべて選択">
                <svg width="16" height="16" viewBox="0 0 16 16"><path d="M16 0v16H0z" fill="#b4b4b4" /></svg>
              </Corner>
              {COLS.map(([c]) => <ColHead key={c} $on={"FGHI".includes(c)}>{c}</ColHead>)}
            </tr>
          </thead>
          <tbody>
            {ROWS.map((r) => (
              <tr key={r}>
                <RowHead $h={r === 1 ? 25 : 31} $on={r === 3}>{r}</RowHead>
                {COLS.map(([c], i) => {
                  if (i > 0 && cellAt(COLS[i - 1][0], r).span) return null;
                  const d = cellAt(c, r);
                  const line = lineColors(i, r);
                  return (
                    <Cell key={c} colSpan={d.span} $fill={fillAt(c, r)} $right={line.right} $bottom={line.bottom} $align={d.align} $bold={d.bold} $white={d.white}>
                      {d.text}
                      {c === "F" && r === 3 && (
                        <>
                          <Selection />
                          <FillOptions aria-label="オートフィル オプション">
                            <svg width="16" height="14" viewBox="0 0 16 14" fill="none" stroke="#888">
                              <path d="M1.500.5h12v4h-12zM1.500 4.500h6v4h-6z" />
                              <path d="M2 1h5v3H2z" fill="#3a78f0" stroke="#3a78f0" />
                              <path d="M1 12.500h7M1 10.500h7" strokeDasharray="1 1" />
                              <path d="M12.500 8v5M10 10.500h5" />
                            </svg>
                          </FillOptions>
                        </>
                      )}
                    </Cell>
                  );
                })}
              </tr>
            ))}
            <tr>
              <RowHead $h={31} />
              {COLS.map(([c]) => <Cell key={c} $right={LINE} $bottom={LINE} />)}
            </tr>
          </tbody>
        </Grid>
      </GridView>
      <VScroll>
        <svg width="10" height="7" viewBox="0 0 10 7"><path d="M5 0l5 7H0z" fill="#6e6e6e" /></svg>
        <VTrack><VThumb /></VTrack>
        <svg width="10" height="7" viewBox="0 0 10 7"><path d="M5 7l5-7H0z" fill="#6e6e6e" /></svg>
      </VScroll>
    </SheetArea>
  );
}

function Bottom() {
  return (
    <>
      <SheetTabs>
        <IconButton $w={34} aria-label="前のシート"><svg width="7" height="10" viewBox="0 0 7 10" fill="none" stroke="#999" strokeWidth="1.200"><path d="M6 .5 1 5l5 4.500" /></svg></IconButton>
        <IconButton $w={34} aria-label="次のシート"><svg width="7" height="10" viewBox="0 0 7 10" fill="none" stroke="#999" strokeWidth="1.200"><path d="m1 .5 5 4.500-5 4.500" /></svg></IconButton>
        <SheetTab><SheetName>Sheet1</SheetName></SheetTab>
        <Rule $h={18} $top={0} />
        <IconButton $w={94} aria-label="新しいシート"><svg width="11" height="11" viewBox="0 0 11 11" stroke="#333"><path d="M0 5.500h11M5.500 0v11" /></svg></IconButton>
        <Spacer />
        <Dots $w={16}>
          <svg width="2" height="10" viewBox="0 0 2 10" fill="#333"><path d="M0 0h2v2H0zM0 4h2v2H0zM0 8h2v2H0z" /></svg>
        </Dots>
        <HScroll>
          <svg width="7" height="10" viewBox="0 0 7 10"><path d="M0 5l7-5v10z" fill="#6e6e6e" /></svg>
          <HTrack><HThumb /></HTrack>
          <svg width="7" height="10" viewBox="0 0 7 10"><path d="M7 5 0 0v10z" fill="#6e6e6e" /></svg>
        </HScroll>
      </SheetTabs>
      <StatusBar>
        <span>準備完了</span>
        <IconButton $w={54} $h={20} aria-label="マクロの記録">
          <Ico w={15} h={13}><path stroke="#333" d="M5 11.500H.5v-11h13V4M.5 3h13M2.500 5.500h4M2.500 8h2" /><circle cx="10" cy="8.500" r="4" stroke="#333" /><circle cx="10" cy="8.500" r="1.500" fill="#333" /></Ico>
        </IconButton>
        <Spacer />
        <Stats>
          {STATS.map((s) => <span key={s}>{s}</span>)}
        </Stats>
        <ViewButton $on aria-label="標準"><Ico w={14} h={14}><path stroke="#222" d="M.5.5h13v13H.5zM5 1v12M9 1v12M1 5h12M1 9h12" /></Ico></ViewButton>
        <ViewButton aria-label="ページ レイアウト"><Ico w={14} h={14}><path stroke="#222" d="M.5.5h13v13H.5zM3.500 2.500h7v9h-7zM5 5h4M5 7h4M5 9h4" /></Ico></ViewButton>
        <ViewButton aria-label="改ページ プレビュー"><Ico w={14} h={14}><path stroke="#222" d="M.5.5h13v13H.5zM.5 8.500h9v-8M4.500.5v8" /></Ico></ViewButton>
        <ZoomButton $w={20} aria-label="縮小"><svg width="8" height="9" viewBox="0 0 8 9" stroke="#444"><path d="M0 4.500h8" /></svg></ZoomButton>
        <Slider type="range" aria-label="ズーム" min={0} max={200} defaultValue={101} />
        <ZoomButton $w={18} aria-label="拡大"><svg width="9" height="9" viewBox="0 0 9 9" stroke="#444"><path d="M0 4.500h9M4.500 0v9" /></svg></ZoomButton>
        <ZoomValue>100%</ZoomValue>
      </StatusBar>
    </>
  );
}

export default function App() {
  return (
    <Window>
      <GlobalStyle />
      <Title />
      <RibbonTabs />
      <HomeRibbon />
      <Formula />
      <Sheet />
      <Bottom />
    </Window>
  );
}
